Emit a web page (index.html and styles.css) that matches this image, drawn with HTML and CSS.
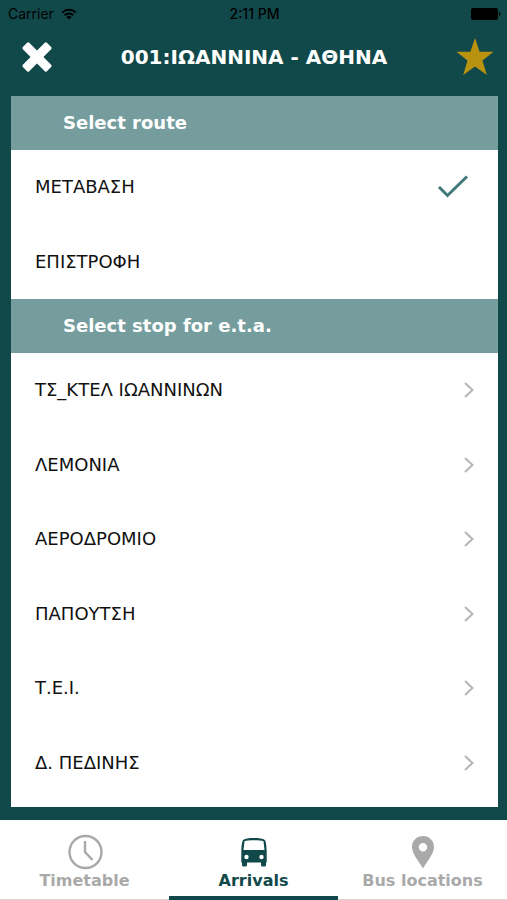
FILE: index.html
```html
<!DOCTYPE html>
<html lang="en">
<head>
<meta charset="utf-8">
<meta name="viewport" content="width=device-width, initial-scale=1">
<title>001:ΙΩΑΝΝΙΝΑ - ΑΘΗΝΑ</title>
<link rel="stylesheet" href="styles.css">
</head>
<body>
<div class="status">
  <div class="carrier">
    <span>Carrier</span>
    <svg width="16" height="12" viewBox="0 0 16 12" fill="none" stroke="#000" stroke-width="2"><path d="M1.200 4.600a9.800 9.800 0 0 1 13.600 0M3.700 7.300a6.200 6.200 0 0 1 8.600 0"/><path d="M8 11.600 5.400 9a3.700 3.700 0 0 1 5.200 0z" fill="#000" stroke="none"/></svg>
  </div>
  <span class="time">2:11 PM</span>
  <div class="battery">
    <svg width="30" height="12" viewBox="0 0 30 12"><rect width="27" height="12" rx="2"/><path d="M28 4c2 .5 2 3.500 0 4z"/></svg>
  </div>
</div>
<header class="bar">
  <button class="icon-button" aria-label="Close">
    <svg width="32" height="32" viewBox="0 0 32 32" fill="#fff"><g transform="rotate(45 16 16)"><rect x="-1" y="11.500" width="34" height="9" rx="1.500"/><rect x="11.500" y="-1" width="9" height="34" rx="1.500"/></g></svg>
  </button>
  <h1>001:ΙΩΑΝΝΙΝΑ - ΑΘΗΝΑ</h1>
  <button class="icon-button" aria-label="Favourite">
    <svg width="38" height="38" viewBox="0 0 38 38" fill="#b9930f"><path d="M19 0 23.600 13.800H37.500L26.500 22.500 30.800 37 19 28.600 7.200 37 11.500 22.500.5 13.800H14.400z"/></svg>
  </button>
</header>
<main class="card">
  <h2>Select route</h2>
  <div class="list routes">
    <button class="row" aria-pressed="true"><span>ΜΕΤΑΒΑΣΗ</span>
      <svg class="check" width="32" height="26" viewBox="0 0 32 26"><path d="M2 13 10.500 21.500 30 2.500"/></svg></button>
    <button class="row" aria-pressed="false"><span>ΕΠΙΣΤΡΟΦΗ</span></button>
  </div>
  <h2>Select stop for e.t.a.</h2>
  <div class="list stops">
    <a class="row" href="#"><span>ΤΣ_ΚΤΕΛ ΙΩΑΝΝΙΝΩΝ</span><svg width="10" height="16" viewBox="0 0 10 16"><path d="M1 1 8.500 8 1 15"/></svg></a>
    <a class="row" href="#"><span>ΛΕΜΟΝΙΑ</span><svg width="10" height="16" viewBox="0 0 10 16"><path d="M1 1 8.500 8 1 15"/></svg></a>
    <a class="row" href="#"><span>ΑΕΡΟΔΡΟΜΙΟ</span><svg width="10" height="16" viewBox="0 0 10 16"><path d="M1 1 8.500 8 1 15"/></svg></a>
    <a class="row" href="#"><span>ΠΑΠΟΥΤΣΗ</span><svg width="10" height="16" viewBox="0 0 10 16"><path d="M1 1 8.500 8 1 15"/></svg></a>
    <a class="row" href="#"><span>Τ.Ε.Ι.</span><svg width="10" height="16" viewBox="0 0 10 16"><path d="M1 1 8.500 8 1 15"/></svg></a>
    <a class="row" href="#"><span>Δ. ΠΕΔΙΝΗΣ</span><svg width="10" height="16" viewBox="0 0 10 16"><path d="M1 1 8.500 8 1 15"/></svg></a>
  </div>
</main>
<nav class="tabs">
  <a class="tab" href="#">
    <svg width="36" height="36" viewBox="0 0 36 36" fill="none" stroke="#a9a9a9" stroke-width="2.400"><circle cx="18.500" cy="18" r="16"/><path d="M18 7v11l7.500 8"/></svg>
    <span>Timetable</span>
  </a>
  <a class="tab active" href="#" aria-current="page">
    <svg width="36" height="36" viewBox="0 0 36 36" fill="#11494b"><path fill-rule="evenodd" d="M18 4c5 0 9 .5 10.800 2 1.200 1 1.700 6 1.900 11v11.500H30V31a1.500 1.500 0 0 1-1.500 1.500H26.500A1.500 1.500 0 0 1 25 31v-2.500H11V31a1.500 1.500 0 0 1-1.500 1.500H7.500A1.500 1.500 0 0 1 6 31v-2.500H5.300V17c.2-5 .7-10 1.900-11C9 4.500 13 4 18 4zM8.500 7.200 7.500 16h21L27.500 7.200C24 5.800 12 5.800 8.500 7.200zM10.500 20.800a2.200 2.200 0 1 0 0 4.400 2.200 2.200 0 0 0 0-4.400zm15 0a2.200 2.200 0 1 0 0 4.400 2.200 2.200 0 0 0 0-4.400z"/></svg>
    <span>Arrivals</span>
  </a>
  <a class="tab" href="#">
    <svg width="36" height="36" viewBox="0 0 36 36" fill="#a9a9a9"><path fill-rule="evenodd" d="M18 2C11.700 2 7 6.700 7 13c0 7 7.500 15 11 21.500C21.500 28 29 20 29 13 29 6.700 24.300 2 18 2zm0 7a4.200 4.200 0 1 1 0 8.400A4.200 4.200 0 0 1 18 9z"/></svg>
    <span>Bus locations</span>
  </a>
</nav>
</body>
</html>
```
FILE: styles.css
```css
* { box-sizing: border-box; }

body {
  margin: 0;
  min-height: 100vh;
  display: flex;
  flex-direction: column;
  background: #11494b;
  font-family: Verdana, "DejaVu Sans", sans-serif;
  color: #111;
}

button {
  border: 0;
  background: none;
  font: inherit;
  color: inherit;
  cursor: pointer;
}

a { color: inherit; text-decoration: none; }

svg { display: block; flex: none; }

.status {
  display: grid;
  grid-template-columns: 1fr auto 1fr;
  align-items: center;
  height: 27px;
  padding: 0 6px 0 8px;
  font: 14px/20px Inter, sans-serif;
  color: #000;
}

.carrier { display: flex; align-items: center; gap: 7px; }
.time { font-weight: 500; }
.battery { justify-self: end; }

.bar {
  display: flex;
  align-items: center;
  height: 69px;
  padding: 0 13px 10px 18px;
}

.icon-button {
  display: grid;
  place-items: center;
  width: 38px;
  height: 38px;
  padding: 0;
}

h1 {
  flex: 1;
  margin: 0;
  padding-right: 4px;
  font-size: 20px;
  line-height: 24px;
  text-align: center;
  color: #fff;
}

.card {
  flex: 1;
  display: flex;
  flex-direction: column;
  margin: 0 9px 13px 11px;
  background: #fff;
}

h2 {
  margin: 0;
  padding: 0 52px;
  font-size: 18px;
  line-height: 54px;
  color: #fff;
  background: #759d9e;
}

.list { display: grid; }
.routes { gap: 1px; }
.stops { flex: 1; grid-auto-rows: 1fr; padding-bottom: 7px; }

.row {
  display: flex;
  align-items: center;
  justify-content: space-between;
  min-height: 74px;
  padding: 0 24px;
  font-size: 18px;
  line-height: 24px;
  text-align: left;
}

.row path { fill: none; stroke: #b5b5b5; stroke-width: 2; }
.row .check { margin-right: 5px; }
.row .check path { stroke: #3f797b; stroke-width: 3; }

.tabs {
  display: grid;
  grid-template-columns: repeat(3, 1fr);
  background: #fff;
}

.tab {
  display: flex;
  flex-direction: column;
  align-items: center;
  height: 80px;
  padding-top: 14px;
  border-bottom: 1px solid #d5d5d5;
  font-size: 16px;
  line-height: 22px;
  font-weight: bold;
  color: #a9a9a9;
}

.tab.active { color: #11494b; border-bottom: 4px solid #11494b; }
```
